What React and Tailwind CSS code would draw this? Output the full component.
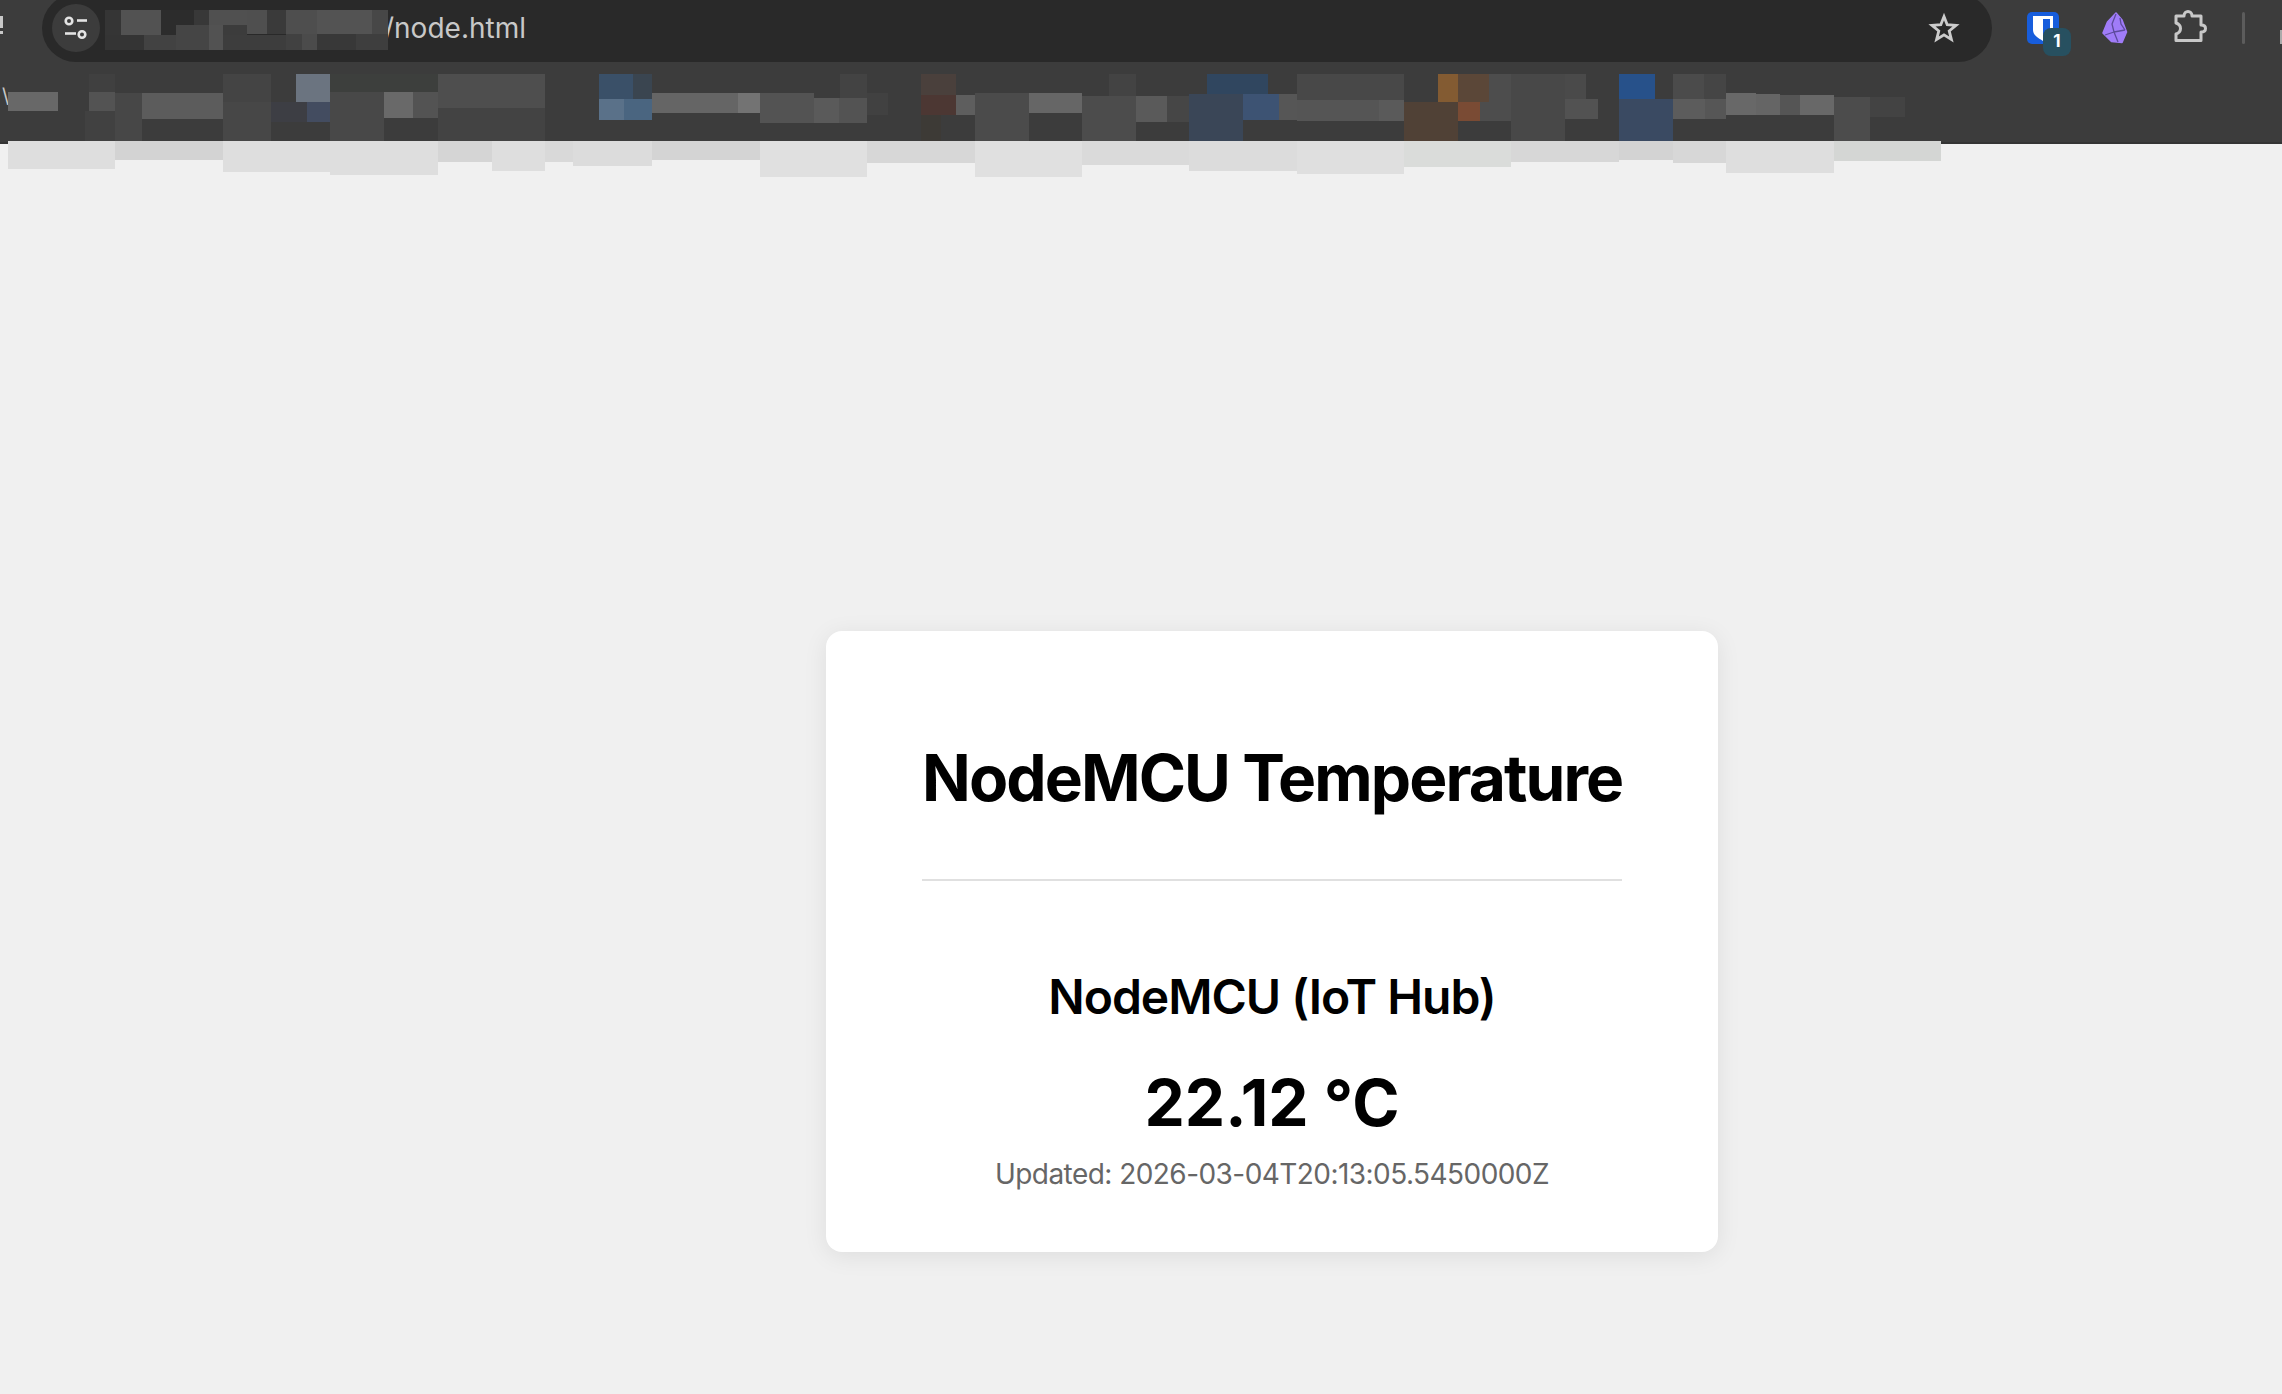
import React from 'react';

// pixelated redaction blocks: [x, y, w, h, colour]
const mosaic = [
  // address bar
  [105, 10, 16, 25, '#353535'], [121, 10, 40, 25, '#525252'], [161, 10, 15, 25, '#2c2c2c'], [176, 10, 18, 15, '#2c2c2c'],
  [194, 10, 15, 15, '#383838'], [209, 10, 38, 15, '#505050'], [247, 10, 20, 24, '#4f4f4f'], [267, 10, 19, 24, '#3a3a3a'],
  [286, 10, 31, 24, '#4e4e4e'], [317, 10, 55, 24, '#535353'], [372, 10, 16, 24, '#474747'],
  [176, 25, 33, 10, '#454545'], [209, 25, 14, 25, '#525252'], [223, 25, 24, 10, '#3c3c3c'],
  [105, 35, 39, 15, '#343434'], [144, 35, 32, 15, '#424242'], [176, 35, 33, 15, '#454545'], [223, 35, 63, 15, '#3d3d3d'],
  [286, 34, 16, 16, '#414141'], [302, 34, 15, 16, '#4b4b4b'], [317, 34, 39, 16, '#383838'], [356, 34, 32, 16, '#3e3e3e'],
  // bookmarks bar
  [8, 92, 50, 19, '#686868'], [89, 74, 26, 18, '#404040'], [89, 92, 26, 19, '#535353'], [85, 111, 30, 30, '#414141'],
  [115, 93, 27, 48, '#474747'], [142, 93, 81, 26, '#5c5c5c'], [223, 74, 48, 28, '#444444'], [223, 102, 48, 39, '#474747'],
  [296, 74, 34, 28, '#6b7480'], [271, 102, 36, 20, '#3d3e44'], [307, 102, 23, 20, '#434c60'],
  [330, 74, 108, 18, '#3d3f3d'], [330, 92, 54, 49, '#484848'], [384, 92, 29, 26, '#696969'], [413, 92, 25, 26, '#535353'],
  [438, 74, 107, 34, '#4e4e4e'], [438, 108, 107, 33, '#434343'],
  [599, 74, 34, 25, '#3a5068'], [633, 74, 19, 25, '#3a4550'], [599, 99, 25, 21, '#5a7189'], [624, 99, 28, 21, '#4a6580'],
  [652, 93, 86, 20, '#656565'], [738, 93, 22, 20, '#737373'], [760, 93, 54, 30, '#535353'], [814, 98, 25, 25, '#5a5a5a'],
  [839, 98, 28, 25, '#535353'], [840, 74, 27, 24, '#434343'], [867, 93, 21, 22, '#414141'],
  [921, 74, 35, 21, '#4a403c'], [921, 95, 35, 20, '#4c3733'], [956, 95, 19, 20, '#5e5e5e'], [921, 115, 20, 26, '#3d3a36'],
  [975, 93, 54, 48, '#4b4b4b'], [1029, 93, 53, 20, '#666666'], [1082, 96, 54, 45, '#4c4c4c'], [1136, 96, 31, 26, '#5a5a5a'],
  [1167, 96, 22, 26, '#464646'], [1109, 74, 27, 22, '#434343'],
  [1207, 74, 61, 20, '#30465f'], [1189, 94, 54, 47, '#3a4657'], [1243, 94, 36, 26, '#3d5373'], [1279, 94, 18, 26, '#565656'],
  [1297, 74, 107, 26, '#484848'], [1297, 100, 82, 21, '#555555'], [1379, 100, 25, 21, '#5a5a5a'],
  [1438, 74, 20, 28, '#835b32'], [1458, 74, 31, 28, '#5b4738'], [1489, 74, 22, 47, '#4d4d4d'], [1404, 102, 54, 39, '#504136'],
  [1458, 102, 22, 19, '#7a4b34'], [1480, 102, 9, 19, '#4d4d4d'], [1511, 74, 54, 67, '#484848'], [1565, 74, 21, 25, '#4a4a4a'],
  [1565, 99, 33, 20, '#525252'], [1619, 74, 36, 25, '#27518a'], [1619, 99, 54, 42, '#3a4a62'], [1673, 74, 31, 25, '#4b4b4b'],
  [1704, 74, 22, 25, '#454545'], [1673, 99, 32, 20, '#5c5c5c'], [1705, 99, 21, 20, '#565656'], [1726, 93, 30, 22, '#686868'],
  [1756, 94, 24, 21, '#656565'], [1780, 95, 20, 20, '#555555'], [1800, 95, 34, 20, '#686868'], [1834, 97, 36, 44, '#4c4c4c'],
  [1870, 97, 35, 20, '#434343'],
  // spill below the bar
  [8, 141, 107, 28, '#dedede'], [115, 141, 108, 19, '#d3d3d3'], [223, 141, 107, 31, '#dedede'], [330, 141, 108, 34, '#dedede'],
  [438, 141, 54, 21, '#d5d5d5'], [492, 141, 53, 30, '#dedede'], [545, 141, 28, 21, '#d9d9d9'], [573, 141, 79, 25, '#dcdcdc'],
  [652, 141, 108, 19, '#d4d4d4'], [760, 141, 107, 36, '#e0e0e0'], [867, 141, 108, 22, '#d7d7d7'], [975, 141, 107, 36, '#e0e0e0'],
  [1082, 141, 107, 24, '#dadada'], [1189, 141, 108, 30, '#dcdcdc'], [1297, 141, 107, 33, '#dfdfdf'], [1404, 141, 107, 26, '#dadcda'],
  [1511, 141, 108, 21, '#d7d7d7'], [1619, 141, 54, 19, '#d3d3d3'], [1673, 141, 53, 22, '#d7d7d7'], [1726, 141, 108, 32, '#dedede'],
  [1834, 141, 107, 20, '#d4d6d4'],
];

const Mosaic = () => (
  <svg className="absolute top-0 left-0 pointer-events-none" width="2282" height="180" shapeRendering="crispEdges">
    {mosaic.map(([x, y, w, h, fill], i) => (
      <rect key={i} x={x} y={y} width={w} height={h} fill={fill} />
    ))}
  </svg>
);

const TuneIcon = () => (
  <svg width="26" height="26" viewBox="0 0 26 26" fill="none" stroke="#e4e4e4" strokeWidth="2.600">
    <circle cx="6" cy="6" r="3.300" />
    <path d="M14 5.500h10" />
    <circle cx="19" cy="19.500" r="3.300" />
    <path d="M2 18.500h11" />
  </svg>
);

const StarIcon = () => (
  <svg width="32" height="32" viewBox="0 0 32 32" fill="none" stroke="#cccccc" strokeWidth="2.800" strokeLinejoin="miter" className="ml-auto">
    <path d="M16 4.500 19.200 12.700 28 13.300 21.200 18.900 23.400 27.500 16 22.800 8.600 27.500 10.800 18.900 4 13.300 12.800 12.700z" />
  </svg>
);

const Bitwarden = () => (
  <div className="relative w-[32px] h-[32px] mt-[12px] mb-auto">
    <svg width="32" height="32" viewBox="0 0 32 32">
      <rect width="32" height="32" rx="5" fill="#175ddc" />
      <path d="M6 4h20v14c0 5-5 8-10 11C11 26 6 23 6 18z" fill="#fff" />
      <path d="M16 7h7v11c0 3-4 6-7 7.500z" fill="#175ddc" />
    </svg>
    <span className="absolute left-[16px] top-[16px] w-[28px] h-[28px] rounded-[8px] bg-[#275060] flex items-center justify-center text-white text-[17px] font-bold font-['Inter',sans-serif]">1</span>
  </div>
);

const Obsidian = () => (
  <svg width="26" height="32" viewBox="0 0 26 32" className="mt-[12px] mb-auto">
    <path d="M14 1 20 8 24.500 20 20 30.500 9.500 29.500 1 21 5.500 10z" fill="#a07cf8" stroke="#a07cf8" strokeWidth="1.600" strokeLinejoin="round" />
    <path d="M14 2 10 12 12 20M12 20 23 18M12 20 3 23M12 20 16 30M18 6 19 12 23 18" fill="none" stroke="#5d4a9c" strokeWidth="1.300" />
  </svg>
);

const PuzzleIcon = () => (
  <svg width="34" height="32" viewBox="0 0 34 32" fill="none" stroke="#c8c8c8" strokeWidth="3" strokeLinejoin="round" className="mt-[10px] mb-auto">
    <path d="M3 6h8c0-3 2-4.500 4-4.500s4 1.500 4 4.500h9v9c3 0 4.500 1.500 4.500 3.500S31 22 28 22v8.500H3V24c3-1 4.500-3 4.500-5.500S6 14 3 13z" />
  </svg>
);

const App = () => {
  return (
    <div className="relative h-[1394px] w-[2282px] overflow-hidden bg-[#f0f0f0] flex flex-col font-['Inter',sans-serif]">
      {/* Browser chrome */}
      <header className="h-[144px] bg-[#3c3c3c] border-b-2 border-[#343434]">
        <div className="flex h-[62px] items-stretch">
          <div className="w-[42px] pt-[16px] flex flex-col items-start gap-[3px]">
            <span className="w-[3px] h-[12px] bg-[#c8c8c8]" />
            <span className="w-[3px] h-[3px] bg-[#c8c8c8]" />
          </div>
          <div className="w-[1951px] h-[68px] -mt-[6px] rounded-[34px] bg-[#292929] flex items-center pl-[10px] pr-[32px]">
            <span className="w-[48px] h-[48px] rounded-full bg-[#3c3c3c] flex items-center justify-center">
              <TuneIcon />
            </span>
            <span className="ml-[284px] text-[#c8c8c8] text-[28px]">/node.html</span>
            <StarIcon />
          </div>
          <div className="flex flex-1 h-[62px] pl-[35px]">
            <Bitwarden />
            <span className="ml-[43px]"><Obsidian /></span>
            <span className="ml-[45px]"><PuzzleIcon /></span>
            <span className="ml-[35px] mt-[12px] w-[3px] h-[32px] rounded bg-[#5c5c5c]" />
            <span className="ml-[35px] mt-[30px] w-[2px] h-[14px] bg-[#aaaaaa]" />
          </div>
        </div>
        <p className="pl-[2px] pt-[22px] text-[#c8c8c8] text-[20px] leading-[24px]">\</p>
      </header>

      {/* Page */}
      <main className="flex-1 pl-[826px] pt-[487px]">
        <section className="w-[892px] h-[621px] bg-white rounded-[16px] shadow-[0_4px_24px_rgba(0,0,0,0.08)] px-[96px] pt-[108px] text-center">
          <h1 className="text-[64px] leading-[77px] font-bold tracking-[-1.9px] text-black whitespace-nowrap">NodeMCU Temperature</h1>
          <hr className="mt-[63px] border-t-2 border-[#e0e0e0]" />
          <h2 className="mt-[87px] text-[48px] leading-[58px] font-semibold tracking-[-1px] text-black">NodeMCU (IoT Hub)</h2>
          <p className="mt-[38px] text-[64px] leading-[77px] font-bold text-black">22.12 °C</p>
          <p className="mt-[16px] text-[28px] leading-[34px] tracking-[-0.55px] text-[#666666]">Updated: 2026-03-04T20:13:05.5450000Z</p>
        </section>
      </main>

      <Mosaic />
    </div>
  );
};

export default App;
